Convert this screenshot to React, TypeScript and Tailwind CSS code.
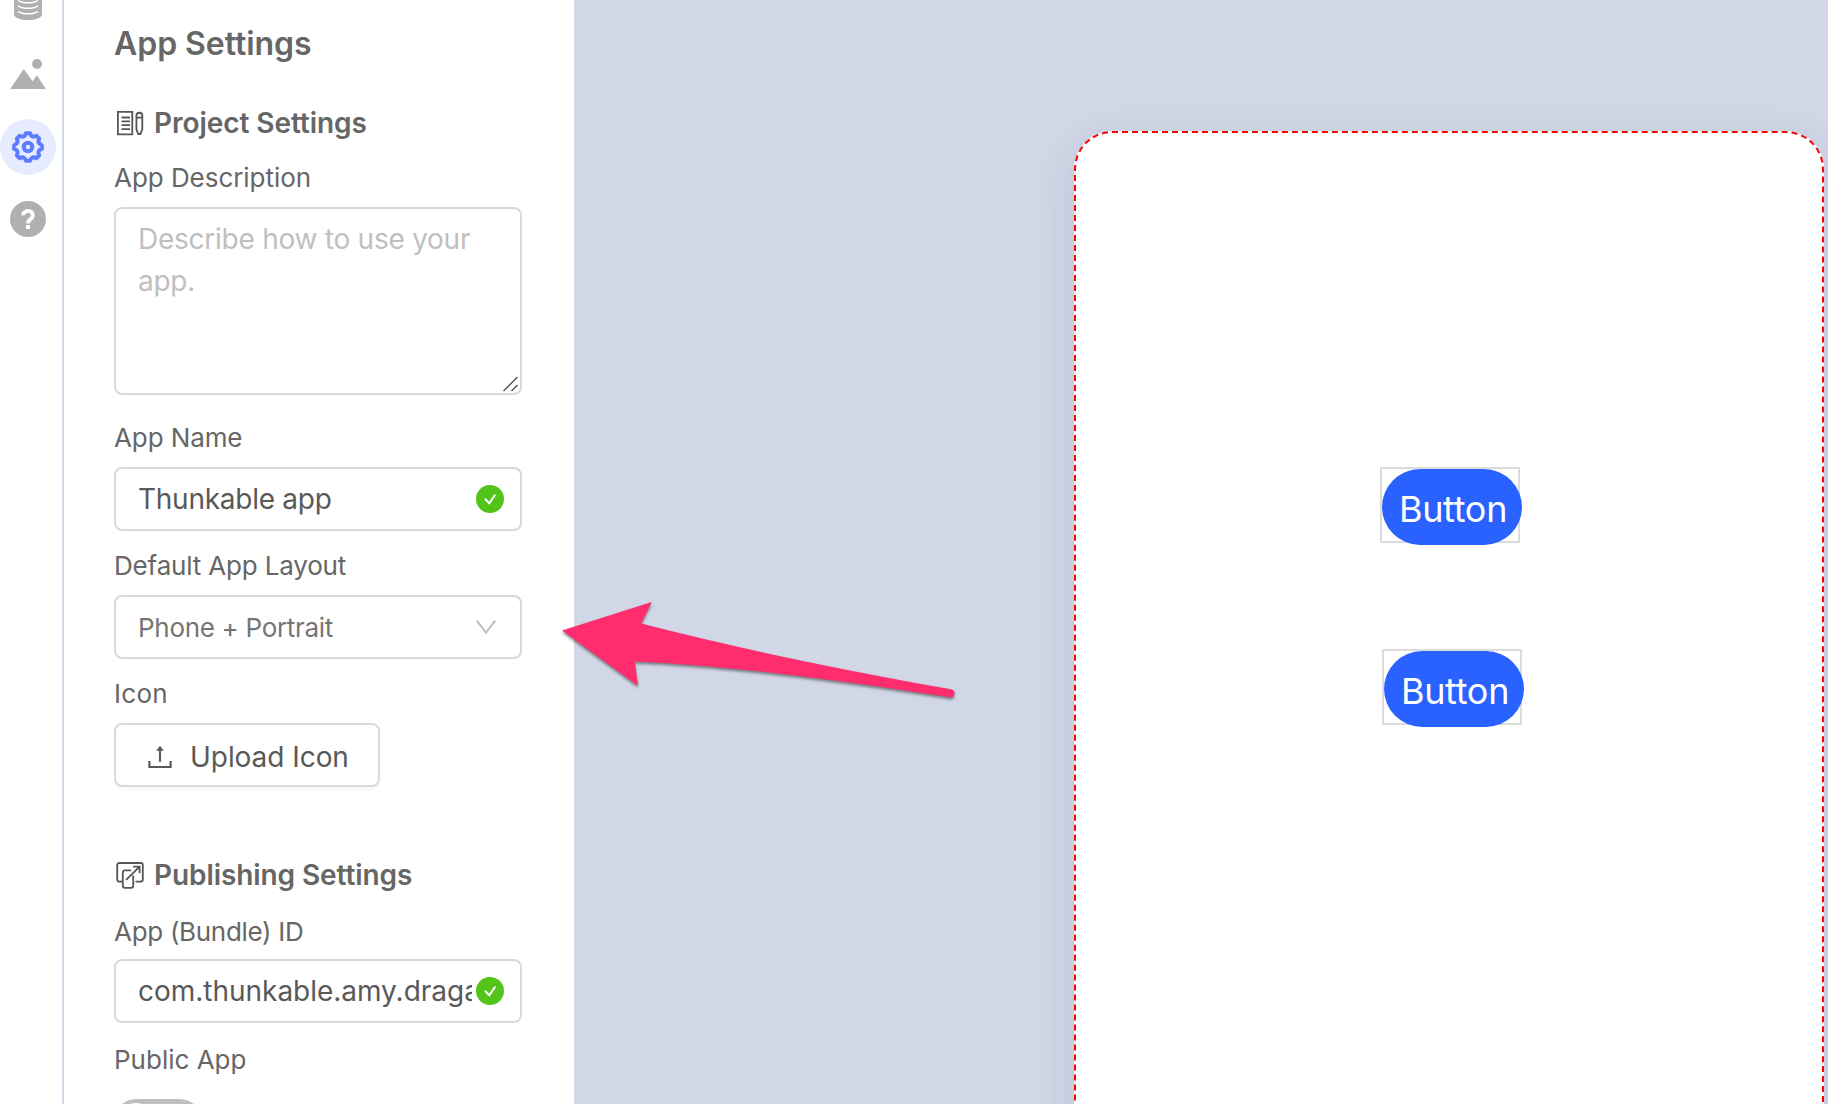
import React from "react";

/* ---------- icons ---------- */

function DatabaseIcon() {
  return (
    <svg width="56" height="56" viewBox="0 0 56 56" fill="none">
      <path d="M14 12h28v29c0 8-28 8-28 0z" fill="#b0b0b0" />
      <g stroke="#fff" strokeWidth="1.5" strokeLinecap="round">
        <path d="M18.5 27.6c4 3 15 3 19 0" />
        <path d="M18.5 33.1c4 3 15 3 19 0" />
        <path d="M18.5 38.6c4 3 15 3 19 0" />
      </g>
    </svg>
  );
}

function ImageIcon() {
  return (
    <svg width="56" height="56" viewBox="0 0 56 56" fill="#b0b0b0">
      <circle cx="37" cy="18" r="5" />
      <path d="M10.2 43L23.8 23l8.8 12.2L37 29.2 45.8 43z" />
    </svg>
  );
}

function gearPath() {
  const point = (r: number, deg: number) => {
    const a = ((deg - 90) * Math.PI) / 180;
    return `${(28 + r * Math.cos(a)).toFixed(2)} ${(28 + r * Math.sin(a)).toFixed(2)}`;
  };
  let d = `M${point(14, -8)}`;
  for (let k = 0; k < 8; k++) {
    const a = k * 45;
    d += `L${point(14, a + 8)}Q${point(9.4, a + 22.5)} ${point(14, a + 37)}`;
  }
  return d + "Z";
}

function GearIcon() {
  return (
    <svg width="56" height="56" viewBox="0 0 56 56" fill="none" stroke="#5c7cff" strokeWidth="4" strokeLinejoin="round">
      <path d={gearPath()} />
      <circle cx="28" cy="28" r="4.2" />
    </svg>
  );
}

function HelpIcon() {
  return (
    <svg width="56" height="56" viewBox="0 0 56 56" fill="none">
      <circle cx="28" cy="28" r="18" fill="#b0b0b0" />
      <path d="M23.2 24.4a4.8 4.4 0 1 1 8 3.2c-1.9 1.5-3.2 2.2-3.2 5" stroke="#fff" strokeWidth="3.8" />
      <path d="M26 34h4v4h-4z" fill="#fff" />
    </svg>
  );
}

function ProjectIcon() {
  return (
    <svg width="30" height="28" viewBox="0 0 30 28" fill="none" stroke="#555" strokeWidth="1.8">
      <path d="M3.9 3.1h14.4v22.4H3.9zM7.5 8.7h8.5M7.5 12.5h8.5M7.5 16.3h8.5M7.5 20.3h8.5" transform="translate(0 -.2)" />
      <path d="M22.4 6.2a3 3 0 0 1 5.9 0v14.2l-1.9 4.6h-2.1l-1.9-4.6zM22.4 8.7h5.9" />
    </svg>
  );
}

function PublishIcon() {
  return (
    <svg width="30" height="28" viewBox="0 0 30 28" fill="none" stroke="#555" strokeWidth="1.8" strokeLinecap="round" strokeLinejoin="round">
      <path d="M8 20.6H5.2a2 2 0 0 1-2-2V4a2 2 0 0 1 2-2h21.6a2 2 0 0 1 2 2v14.6a2 2 0 0 1-2 2h-4.6" />
      <path d="M16.4 9.4h-5.6a2 2 0 0 0-2 2v13.4a2 2 0 0 0 2 2h6.4a2 2 0 0 0 2-2v-9.6" />
      <path d="M12.6 18.4L25.4 5.8M19.8 5.6h5.8v5.8" />
    </svg>
  );
}

function UploadIcon() {
  return (
    <svg width="24" height="24" viewBox="0 0 24 24" fill="none" stroke="#595959" strokeWidth="2.1">
      <path d="M1.4 16v6h21.2v-6" />
      <path d="M12 4v12.8" />
      <path d="M12 .8l3.8 5H8.2z" fill="#595959" stroke="none" />
    </svg>
  );
}

function CheckBadge() {
  return (
    <span className="flex size-7 shrink-0 items-center justify-center rounded-full bg-[#52c41a]">
      <svg width="28" height="28" viewBox="0 0 28 28" fill="none" stroke="#fff" strokeWidth="2" strokeLinecap="round" strokeLinejoin="round">
        <path d="M9.4 14.2l3.8 4.2 5.6-8.2" />
      </svg>
    </span>
  );
}

function Arrow() {
  return (
    <svg className="absolute left-[550px] top-[580px] overflow-visible" width="420" height="140" viewBox="0 0 420 140">
      <path
        d="M12 50.4L101.7 22 91.3 43.6Q220 77 401 109.3a4 4 0 0 1-1.2 8Q200 86 84.700 81.400L88 105.700z"
        fill="#ff2d6d"
        className="drop-shadow-[0_2px_1.5px_rgba(0,0,0,0.45)]"
      />
    </svg>
  );
}

/* ---------- form parts ---------- */

const box = "w-[408px] rounded-lg border-2 border-[#d9d9d9] bg-white";

function Label({ children, className }: { children: React.ReactNode; className: string }) {
  return <div className={`h-10 whitespace-nowrap pt-px text-[26px] leading-10 text-[#666] ${className}`}>{children}</div>;
}

function SectionTitle({ icon, children, className }: { icon: React.ReactNode; children: React.ReactNode; className: string }) {
  return (
    <h2 className={`flex h-10 items-center gap-2.5 whitespace-nowrap text-[28px] font-semibold leading-10 text-[#666] ${className}`}>
      {icon}
      {children}
    </h2>
  );
}

function TextField({ value, tracking }: { value: string; tracking: string }) {
  return (
    <div className={`${box} flex h-16 items-center pl-[22px] pr-4`}>
      <div className={`mr-1 min-w-0 flex-1 overflow-hidden whitespace-nowrap text-[28px] leading-10 text-[#595959] ${tracking}`}>{value}</div>
      <CheckBadge />
    </div>
  );
}

function CanvasButton({ className }: { className: string }) {
  return (
    <div className={`absolute h-[76px] w-[140px] border-2 border-[#dcdcdc] ${className}`}>
      <div className="flex h-[76px] w-[140px] items-center justify-center rounded-full bg-[#2962ff] pl-[2px] pt-[3px] text-[36px] leading-none tracking-[-0.3px] text-white">
        Button
      </div>
    </div>
  );
}

/* ---------- page ---------- */

export default function App() {
  return (
    <div className="relative flex h-[1104px] w-[1828px] overflow-hidden bg-[#d1d7e6] font-['Inter',sans-serif]">
      <nav className="flex w-16 shrink-0 flex-col border-r-2 border-[#d0d9e7] bg-white">
        <div className="-mt-[27px] flex flex-col">
          <DatabaseIcon />
          <div className="mt-[17px]">
            <ImageIcon />
          </div>
          <div className="mt-[17px] size-14 rounded-full bg-[#e6ebff]">
            <GearIcon />
          </div>
          <div className="mt-4">
            <HelpIcon />
          </div>
        </div>
      </nav>

      <aside className="flex w-[510px] shrink-0 flex-col bg-white pl-[50px] [&>*]:shrink-0">
        <h1 className="mt-6 h-10 text-[32px] font-semibold leading-10 tracking-[-0.05px] text-[#666]">App Settings</h1>

        <SectionTitle className="mt-[39px] tracking-[-0.06px]" icon={<ProjectIcon />}>
          Project Settings
        </SectionTitle>
        <Label className="mt-[14px] tracking-[-0.05px]">App Description</Label>
        <div className={`${box} relative mt-[10px] h-[188px] px-[22px] pt-[9px] text-[28px] leading-[42px] tracking-[-0.25px] text-[#bfbfbf]`}>
          Describe how to use your app.
          <svg className="absolute bottom-0 right-0" width="20" height="20" viewBox="0 0 20 20" stroke="#555" strokeWidth="1.5">
            <path d="M3.5 18L17.5 4M11.5 18L17.5 12" />
          </svg>
        </div>

        <Label className="mt-[22px] tracking-[-0.1px]">App Name</Label>
        <div className="mt-[10px]">
          <TextField value="Thunkable app" tracking="tracking-[-0.26px]" />
        </div>

        <Label className="mt-[14px] tracking-[-0.17px]">Default App Layout</Label>
        <div className={`${box} mt-[10px] flex h-16 items-center justify-between pl-[22px] pr-6`}>
          <span className="pt-px text-[26px] leading-10 tracking-[-0.3px] text-[#757575]">Phone + Portrait</span>
          <svg width="20" height="14" viewBox="0 0 20 14" fill="none" stroke="#bfbfbf" strokeWidth="2">
            <path d="M.8 .6L10 12.6 19.2 .6" />
          </svg>
        </div>

        <Label className="mt-[14px] tracking-[0.3px]">Icon</Label>
        <div className="mt-[10px] flex h-16 w-[266px] items-center rounded-lg border-2 border-[#d9d9d9] bg-white pl-8 pt-[3px] shadow-[0_4px_0_rgba(0,0,0,0.016)]">
          <UploadIcon />
          <span className="ml-[18px] whitespace-nowrap text-[28px] leading-10 tracking-[-0.05px] text-[#595959]">Upload Icon</span>
        </div>

        <SectionTitle className="mt-[68px] tracking-[-0.09px]" icon={<PublishIcon />}>
          Publishing Settings
        </SectionTitle>
        <Label className="mt-4 tracking-[-0.3px]">App (Bundle) ID</Label>
        <div className="mt-2">
          <TextField value="com.thunkable.amy.dragapp" tracking="tracking-[-0.02px]" />
        </div>

        <Label className="mt-4">Public App</Label>
        <div className="mt-5 h-11 w-[88px] rounded-full bg-[#bfbfbf] p-1">
          <div className="size-9 rounded-full bg-white" />
        </div>
      </aside>

      <main className="min-w-0 flex-1 pl-[500px] pt-[131px]">
        <div className="relative h-[1200px] w-[750px] rounded-[38px] border-2 border-dashed border-[#ff0000] bg-white shadow-[0_12px_44px_rgba(30,40,90,0.12)]">
          <CanvasButton className="left-[304px] top-[334px]" />
          <CanvasButton className="left-[306px] top-[516px]" />
        </div>
      </main>

      <Arrow />
    </div>
  );
}
